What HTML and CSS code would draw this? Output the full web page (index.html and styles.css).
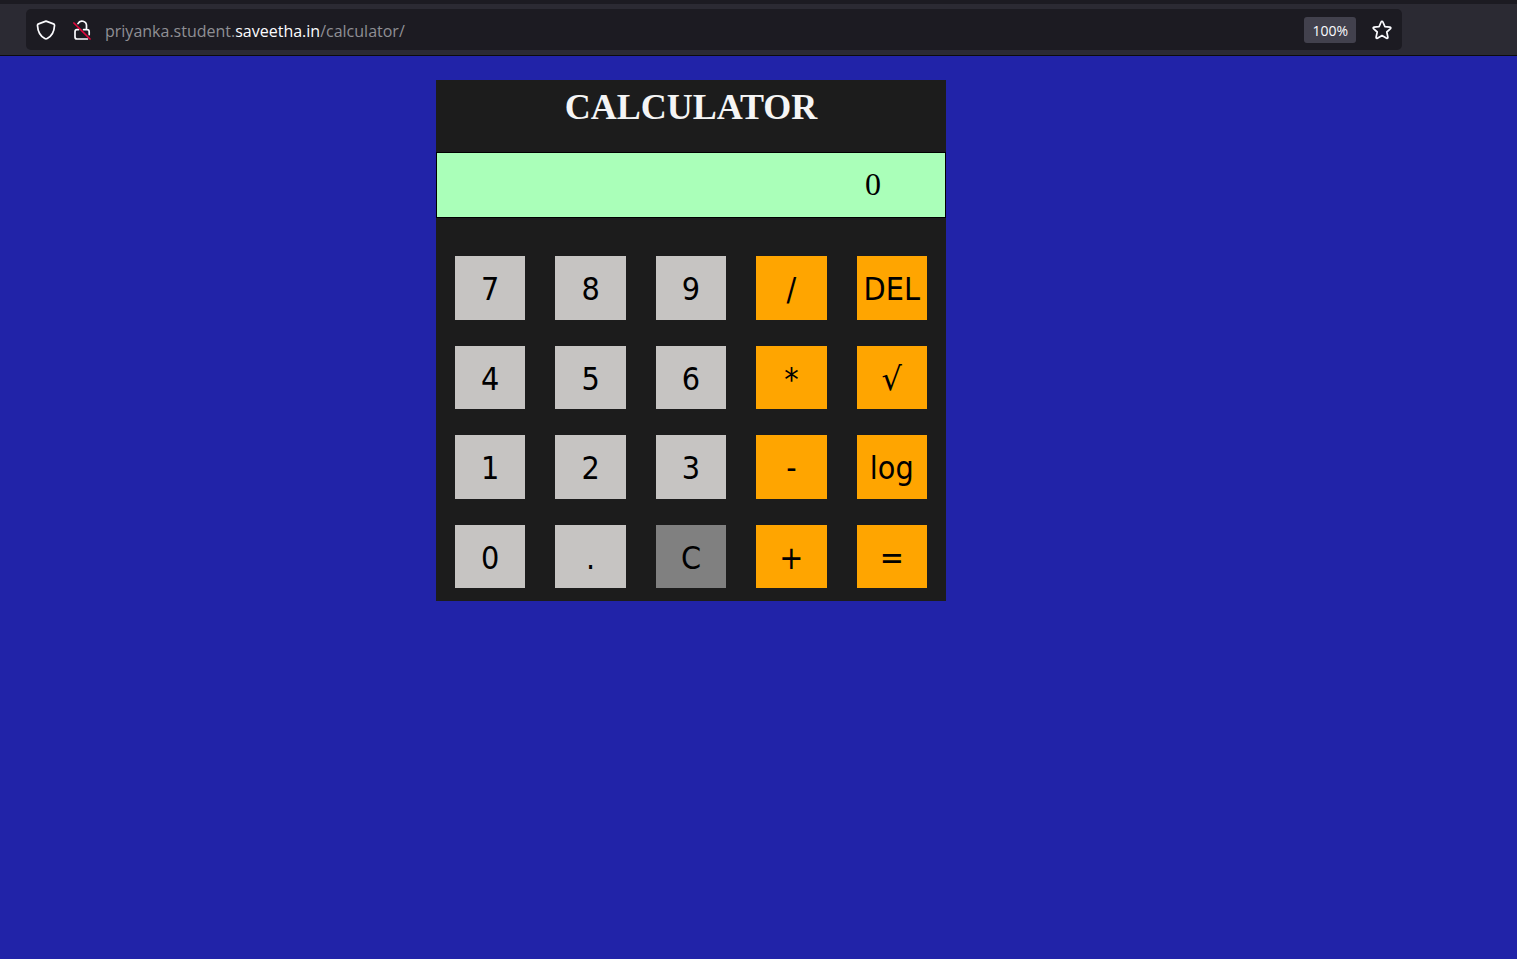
FILE: index.html
```html
<!DOCTYPE html>
<html lang="en">
<head>
<meta charset="utf-8">
<title>Calculator</title>
<meta name="viewport" content="width=device-width, initial-scale=1">
<link rel="stylesheet" href="styles.css">
</head>
<body>
<header class="toolbar">
  <div class="address-bar">
    <div class="bar-group">
      <button class="icon-button" type="button" aria-label="Tracking protection">
        <svg class="icon" viewBox="0 0 20 20" aria-hidden="true"><path d="M10 1.1 L17.4 3.9 C18.2 4.2 18.6 4.8 18.5 5.6 C18.2 11.6 15.6 16.1 11.2 18.6 Q10 19.3 8.8 18.6 C4.4 16.1 1.8 11.6 1.5 5.6 C1.4 4.8 1.8 4.2 2.6 3.9 Z"/></svg>
      </button>
      <button class="icon-button" type="button" aria-label="Connection is not secure">
        <svg class="icon" viewBox="0 0 20 20" aria-hidden="true"><path d="M6 3.6 A4.5 4.5 0 0 1 14.5 5.6 V9.6 H15 Q17.2 9.6 17.2 11.8 V14.6 M15.4 19 H5 Q3 19 3 17 V11.8 Q3 9.6 5 9.6 H6.6 M11.6 9.6 H14.5"/><path class="icon-slash" d="M1.9 3 L18 19"/></svg>
      </button>
    </div>
    <div class="url" role="textbox" aria-label="Address" contenteditable="true" spellcheck="false">priyanka.student.<span class="url-domain">saveetha.in</span>/calculator/</div>
    <div class="bar-group">
      <button class="zoom-level" type="button">100%</button>
      <button class="icon-button" type="button" aria-label="Bookmark this page">
        <svg class="icon" viewBox="0 0 20 20" aria-hidden="true"><path d="M10 1.3 Q10.6 1.3 10.9 2 L12.9 6.7 L18 7.2 Q19.4 7.5 18.5 8.6 L14.8 12 L15.9 17.2 Q16 18.7 14.6 18.2 L10 15.5 L5.4 18.2 Q4 18.7 4.1 17.2 L5.2 12 L1.5 8.6 Q.6 7.5 2 7.2 L7.1 6.7 L9.1 2 Q9.4 1.3 10 1.3 Z"/></svg>
      </button>
    </div>
  </div>
</header>
<main class="page">
  <form class="calculator">
    <h1 class="title">CALCULATOR</h1>
    <input class="display" type="text" value="0" aria-label="Result" readonly>
    <div class="keys">
      <button class="key" type="button">7</button>
      <button class="key" type="button">8</button>
      <button class="key" type="button">9</button>
      <button class="key key-operator" type="button">/</button>
      <button class="key key-operator" type="button">DEL</button>
      <button class="key" type="button">4</button>
      <button class="key" type="button">5</button>
      <button class="key" type="button">6</button>
      <button class="key key-operator" type="button">*</button>
      <button class="key key-operator key-root" type="button">√</button>
      <button class="key" type="button">1</button>
      <button class="key" type="button">2</button>
      <button class="key" type="button">3</button>
      <button class="key key-operator" type="button">-</button>
      <button class="key key-operator" type="button">log</button>
      <button class="key" type="button">0</button>
      <button class="key" type="button">.</button>
      <button class="key key-clear" type="button">C</button>
      <button class="key key-operator" type="button">+</button>
      <button class="key key-operator" type="button">=</button>
    </div>
  </form>
</main>
</body>
</html>
```
FILE: styles.css
```css
* {
  box-sizing: border-box;
}

body {
  margin: 0;
  min-height: 100vh;
  background: #2123a8;
}

.toolbar {
  padding: 5px 115px 5px 26px;
  background: #2b2a33;
  border-top: 4px solid #1c1b22;
  border-bottom: 1px solid #0c0c0d;
}

.address-bar {
  display: flex;
  align-items: center;
  gap: 13px;
  height: 41px;
  padding: 0 10px;
  border-radius: 5px;
  background: #1c1b22;
}

.bar-group {
  display: flex;
  align-items: center;
  gap: 16px;
}

.icon-button {
  display: flex;
  padding: 0;
  border: 0;
  background: none;
}

.icon {
  width: 20px;
  height: 20px;
  fill: none;
  stroke: #fbfbfe;
  stroke-width: 1.7;
  stroke-linecap: round;
  stroke-linejoin: round;
}

.icon-slash {
  stroke: #e5073d;
}

.url {
  flex: 1;
  overflow: hidden;
  padding-top: 2px;
  color: #8f8f94;
  font: 16px/24px "Open Sans", "Noto Sans", sans-serif;
  white-space: nowrap;
  outline: 0;
}

.url-domain {
  color: #fbfbfe;
}

.zoom-level {
  height: 26px;
  padding: 2px 8px 0;
  border: 0;
  border-radius: 3px;
  background: #42414d;
  color: #fbfbfe;
  font: 14px/24px "Open Sans", "Noto Sans", sans-serif;
}

.page {
  display: flex;
  justify-content: center;
  padding: 24px 135px 24px 0;
}

.calculator {
  width: 100%;
  max-width: 510px;
  padding-bottom: 13px;
  background: #1c1c1c;
}

.title {
  margin: 0;
  padding: 7px 0 25px;
  color: #f5f5f5;
  font: bold 36px/40px "Liberation Serif", serif;
  text-align: center;
}

.display {
  display: block;
  width: 100%;
  height: 66px;
  padding: 0 64px 2px 16px;
  border: 1px solid #000;
  border-radius: 0;
  background: #aaffb9;
  color: #000;
  font: 32px "Liberation Serif", serif;
  text-align: right;
  outline: 0;
}

.keys {
  display: grid;
  grid-template-columns: repeat(5, 1fr);
  grid-template-rows: repeat(4, 1fr);
  gap: 26px 30px;
  height: 332px;
  margin: 38px 19px 0;
}

.key {
  min-width: 0;
  padding: 3px 0 0;
  border: 0;
  background: #c6c4c2;
  color: #000;
  font: 32px "DejaVu Sans Condensed", "DejaVu Sans", sans-serif;
}

.key-operator {
  background: #ffa500;
}

.key-root {
  font-family: "DejaVu Sans", sans-serif;
}

.key-clear {
  background: #808080;
}
```
